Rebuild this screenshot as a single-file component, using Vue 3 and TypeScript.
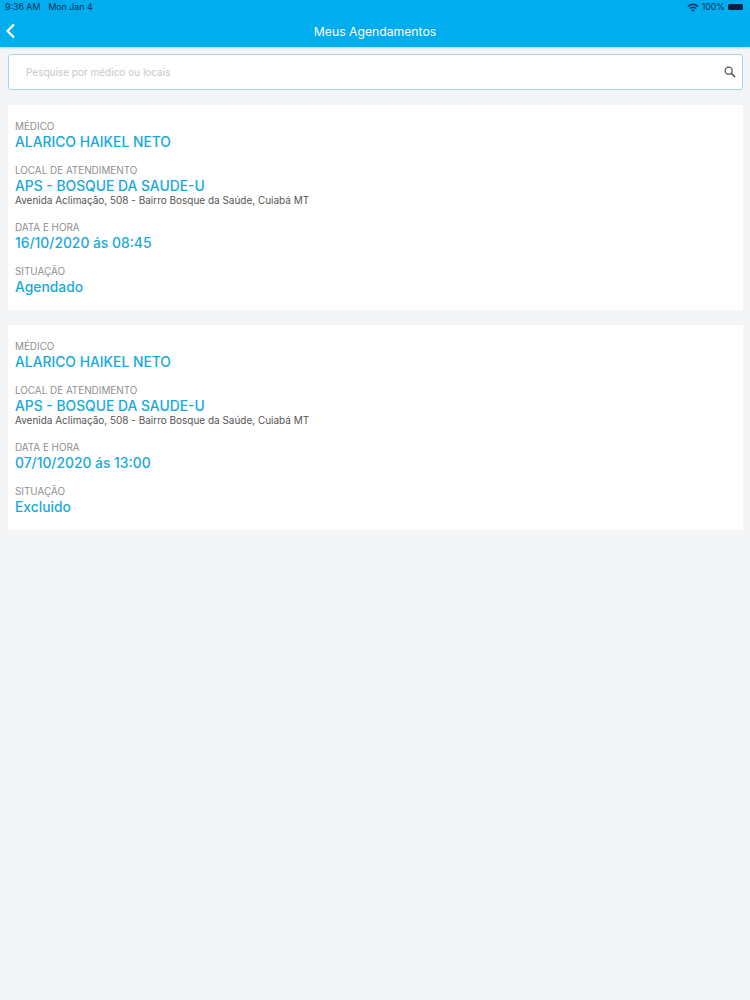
<script setup lang="ts">
interface Item { date: string; status: string }
const items: Item[] = [
  { date: '16/10/2020 ás 08:45', status: 'Agendado' },
  { date: '07/10/2020 ás 13:00', status: 'Excluido' },
]
</script>

<template>
  <div class="page">
    <header class="top">
      <div class="status">
        <span class="time">9:36 AM</span>
        <span class="day">Mon Jan 4</span>
        <span class="spacer"></span>
        <svg class="wifi" width="12" height="9" viewBox="0 0 12 9">
          <path d="M0.3 3 A8 8 0 0 1 11.7 3 L10.5 4.2 A6.3 6.3 0 0 0 1.5 4.2 Z" fill="#0b3a66" />
          <path d="M2.3 5 A5.2 5.2 0 0 1 9.7 5 L8.5 6.2 A3.5 3.5 0 0 0 3.5 6.2 Z" fill="#0b3a66" />
          <path d="M4.3 7 A2.4 2.4 0 0 1 7.7 7 L6 8.8 Z" fill="#0b3a66" />
        </svg>
        <span class="pct">100%</span>
        <span class="battery"></span>
      </div>
      <div class="nav">
        <svg class="back" width="11" height="16" viewBox="0 0 11 16">
          <path d="M9 1.5 L2.5 8 L9 14.5" fill="none" stroke="#fff" stroke-width="2.2" />
        </svg>
        <span class="title">Meus Agendamentos</span>
      </div>
    </header>

    <main class="content">
      <div class="search">
        <span class="placeholder">Pesquise por médico ou locais</span>
        <svg width="12" height="12" viewBox="0 0 12 12">
          <circle cx="4.7" cy="4.7" r="3.5" fill="none" stroke="#555" stroke-width="1.3" />
          <path d="M7.4 7.4 L11 11" stroke="#555" stroke-width="1.6" />
        </svg>
      </div>

      <section v-for="item in items" :key="item.date" class="card">
        <div class="block">
          <div class="label">MÉDICO</div>
          <div class="value">ALARICO HAIKEL NETO</div>
        </div>
        <div class="block">
          <div class="label">LOCAL DE ATENDIMENTO</div>
          <div class="value">APS - BOSQUE DA SAUDE-U</div>
          <div class="address">Avenida Aclimação, 508 - Bairro Bosque da Saúde, Cuiabá MT</div>
        </div>
        <div class="block">
          <div class="label">DATA E HORA</div>
          <div class="value">{{ item.date }}</div>
        </div>
        <div class="block">
          <div class="label">SITUAÇÃO</div>
          <div class="value">{{ item.status }}</div>
        </div>
      </section>
    </main>
  </div>
</template>

<style>
html, body { margin: 0; background: #f3f5f7; }
</style>

<style scoped>
.page {
  width: 750px;
  min-height: 1000px;
  background: #f3f5f7;
  font-family: Inter, "Liberation Sans", sans-serif;
}
.top {
  height: 47px;
  background: #00aeef;
  box-shadow: 0 1px 2px rgba(0, 120, 180, 0.25);
}
.status {
  height: 14px;
  display: flex;
  align-items: center;
  padding: 0 7px 0 5px;
  font-size: 8.8px;
  line-height: 14px;
  color: #062f55;
}
.day { margin-left: 8px; }
.spacer { flex: 1; }
.pct { margin: 0 3px 0 3px; }
.battery {
  width: 15px;
  height: 6px;
  background: #06223f;
  border-radius: 1.5px;
}
.nav {
  height: 33px;
  position: relative;
  display: flex;
  align-items: center;
  justify-content: center;
}
.back {
  position: absolute;
  left: 5px;
  top: 9px;
}
.title {
  color: #fff;
  font-size: 12.2px;
  font-weight: 400;
  position: relative;
  top: 1px;
}
.content {
  padding: 7px 7px 0 8px;
  display: flex;
  flex-direction: column;
  gap: 15px;
}
.search {
  height: 34px;
  background: #fff;
  border: 1px solid #a9d4ea;
  border-radius: 3px;
  display: flex;
  align-items: center;
  justify-content: space-between;
  padding: 0 6px 0 17px;
}
.placeholder {
  font-size: 10px;
  color: #c4c8cc;
}
.card {
  background: #fff;
  height: 205px;
  box-sizing: border-box;
  padding: 15px 7px 0;
  display: flex;
  flex-direction: column;
  gap: 13px;
}
.label {
  font-size: 9.9px;
  line-height: 13px;
  color: #8f8f8f;
}
.value {
  font-size: 13.85px;
  line-height: 18px;
  color: #17a9dc;
  font-weight: 450;
}
.address {
  font-size: 9.97px;
  line-height: 11px;
  margin-bottom: 2px;
  color: #555;
}
</style>
